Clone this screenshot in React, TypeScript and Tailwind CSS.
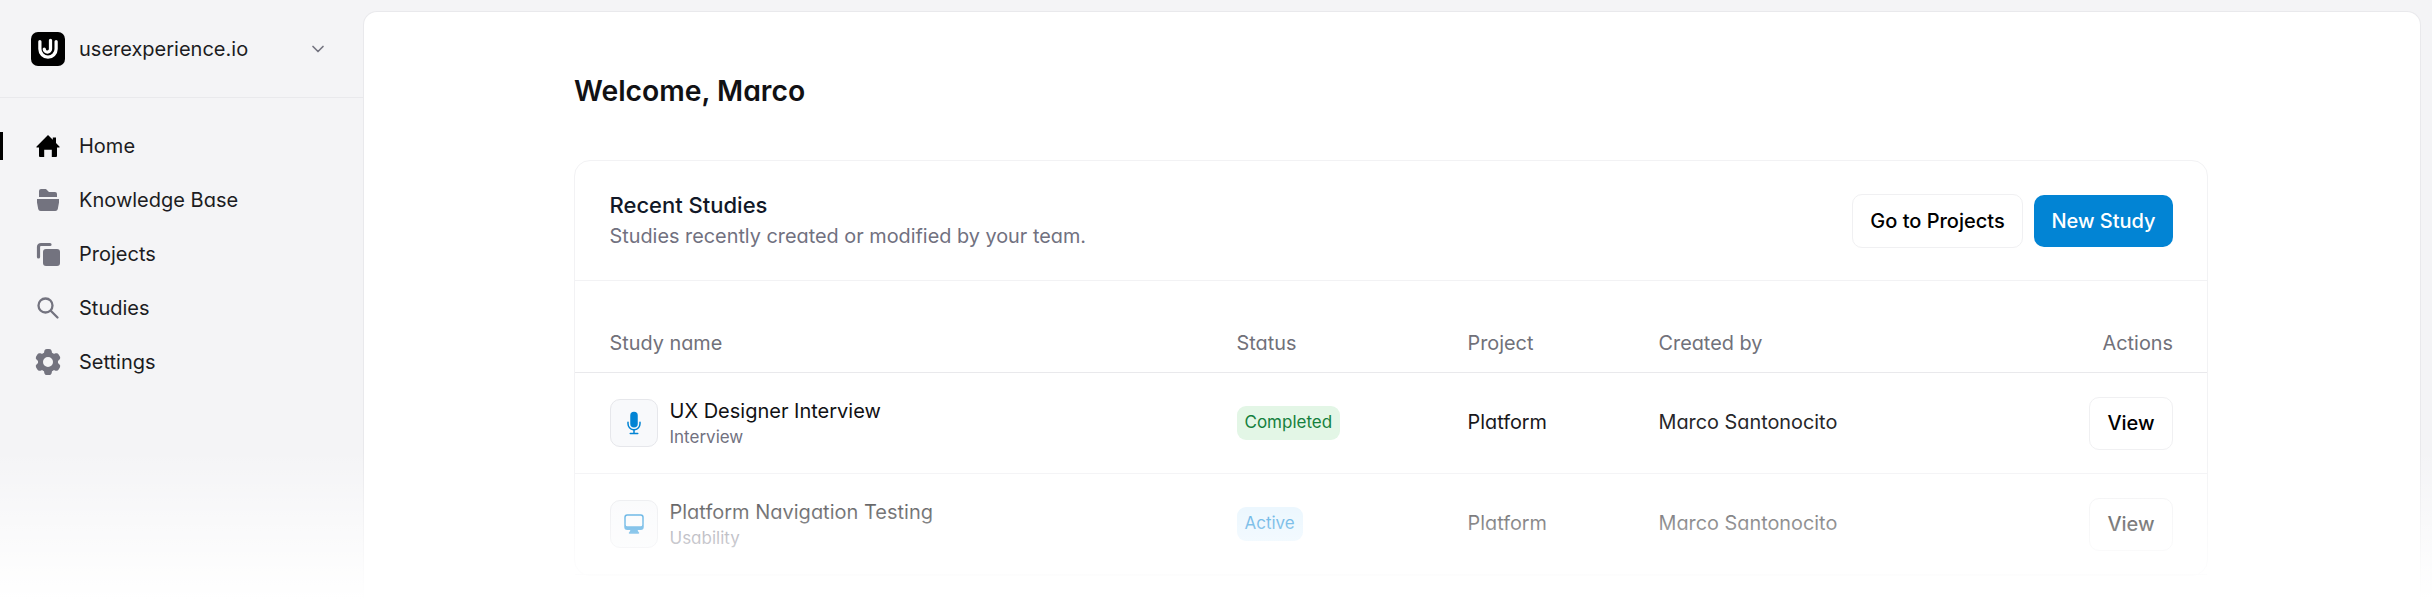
import { ChevronDown } from "lucide-react";
import type { ReactNode } from "react";
import { HiCog6Tooth, HiComputerDesktop, HiMicrophone } from "react-icons/hi2";

function HomeIcon() {
  return (
    <svg viewBox="0 0 24 24" className="size-[24px] shrink-0" fill="currentColor">
      <path d="M12 1 16.8 5.8V3.6h3.2V9l3.4 3.4c.5.5.2 1.2-.5 1.2H21V22a1 1 0 0 1-1 1h-4.2v-7.2H8.2V23H4a1 1 0 0 1-1-1v-8.4H1.1c-.7 0-1-.7-.5-1.2z" />
    </svg>
  );
}

function FolderIcon() {
  return (
    <svg viewBox="0 0 24 24" className="size-[24px] shrink-0" fill="currentColor">
      <path d="M3 3a2 2 0 0 1 2-2h4c1 0 1.6.5 2.2 1.2L13 4h6a2 2 0 0 1 2 2v3H3z" />
      <path d="M1 11h22v3.5l-1.2 6.5a2.5 2.5 0 0 1-2.500 2H4.700a2.500 2.500 0 0 1-2.500-2L1 14.500z" />
    </svg>
  );
}

function StackIcon() {
  return (
    <svg viewBox="0 0 24 24" className="size-[24px] shrink-0" fill="currentColor">
      <rect x="7" y="7" width="17" height="17" rx="3" />
      <path d="M2.5 15V5A2.5 2.5 0 0 1 5 2.5h9" fill="none" stroke="currentColor" strokeWidth="3.2" strokeLinecap="round" />
    </svg>
  );
}

function SearchIcon() {
  return (
    <svg viewBox="0 0 24 24" className="size-[24px] shrink-0" fill="none" stroke="currentColor" strokeWidth="2.3" strokeLinecap="round">
      <circle cx="9.5" cy="9.5" r="7" />
      <path d="M15 15l6.5 6.5" />
    </svg>
  );
}

const navItems = [
  { label: "Home", icon: <HomeIcon />, active: true },
  { label: "Knowledge Base", icon: <FolderIcon /> },
  { label: "Projects", icon: <StackIcon /> },
  { label: "Studies", icon: <SearchIcon /> },
  { label: "Settings", icon: <HiCog6Tooth className="size-[32px] shrink-0" /> },
];

const studies = [
  {
    name: "UX Designer Interview",
    kind: "Interview",
    icon: <HiMicrophone className="size-[24px] text-[#0284d4]" />,
    status: "Completed",
    statusClass: "bg-[#e3f6e6] text-[#15803d]",
  },
  {
    name: "Platform Navigation Testing",
    kind: "Usability",
    icon: <HiComputerDesktop className="size-[24px] text-[#0284d4]" />,
    status: "Active",
    statusClass: "bg-[#e0f2fe] text-[#0284d4]",
  },
];

const rowGrid = "grid grid-cols-[627px_231px_191px_1fr_auto] items-center pl-[34.5px] pr-[34px]";

function Logo() {
  return (
    <div className="flex size-[34px] items-center justify-center rounded-[7px] bg-black">
      <svg viewBox="0 0 24 24" className="size-[30px]" fill="none" stroke="white" strokeLinecap="round">
        <path strokeWidth="2.6" d="M14 5v7a2.5 2.5 0 0 1-5 0" />
        <path strokeWidth="2.6" d="M5.5 6v6a6.5 6.5 0 0 0 13 0V6" />
      </svg>
    </div>
  );
}

function NavRow({ label, icon, active }: { label: string; icon: ReactNode; active?: boolean }) {
  return (
    <div className="relative flex h-[54px] items-center pl-[36px]">
      {active && <span className="absolute left-0 top-[13px] h-[28px] w-[3px] bg-black" />}
      <span className={`flex w-[24px] items-center justify-center ${active ? "text-black" : "text-[#73737f]"}`}>
        {icon}
      </span>
      <span className="ml-[19px] text-[20px] text-[#1c1c22]">{label}</span>
    </div>
  );
}

function OutlineButton({ children, className }: { children: ReactNode; className: string }) {
  return (
    <button
      type="button"
      className={`rounded-[10px] border border-[#f0f0f2] bg-white text-[20px] font-medium text-black ${className}`}
    >
      {children}
    </button>
  );
}

export default function App() {
  return (
    <div
      className="relative flex h-[600px] overflow-hidden bg-[#f4f4f6] pr-[11px] pt-[11px] [font-feature-settings:'cv11']"
      style={{ fontFamily: "Inter, sans-serif" }}
    >
      <aside className="w-[363px] shrink-0">
        <div className="-mt-[11px] flex h-[98px] items-center border-b border-[#e9e9ec] pl-[31px] pr-[35px]">
          <Logo />
          <span className="ml-[14px] text-[20px] text-[#1c1c22]">userexperience.io</span>
          <ChevronDown className="ml-auto size-[20px] text-[#73737f]" />
        </div>
        <nav className="pt-[21px]">
          {navItems.map((item) => (
            <NavRow key={item.label} {...item} />
          ))}
        </nav>
      </aside>

      <main className="min-w-0 flex-1 rounded-t-[14px] border border-b-0 border-[#e9e9ec] bg-white pl-[210px] pr-[212px]">
        <h1 className="mt-[61px] text-[28.3px] font-semibold leading-[36px] text-[#111114]">Welcome, Marco</h1>
        <section className="mt-[51px] rounded-[16px] border border-[#f2f2f4]">
          <div className="flex h-[120px] items-center justify-between border-b border-[#f2f2f4] pl-[34.5px] pr-[34px]">
            <div>
              <h2 className="text-[22px] font-medium leading-[28px] text-[#111827]">Recent Studies</h2>
              <p className="mt-[3px] text-[19.85px] leading-[28px] text-[#71717f]">
                Studies recently created or modified by your team.
              </p>
            </div>
            <div className="flex items-center gap-[11px]">
              <OutlineButton className="h-[54px] w-[171px]">Go to Projects</OutlineButton>
              <button
                type="button"
                className="h-[52px] w-[139px] rounded-[10px] bg-[#0284d4] text-[20px] font-medium text-white"
              >
                New Study
              </button>
            </div>
          </div>

          <div className={`${rowGrid} h-[92px] border-b border-[#e9e9ec] pt-[35px] text-[19.85px] text-[#71717a]`}>
            <span>Study name</span>
            <span>Status</span>
            <span>Project</span>
            <span>Created by</span>
            <span>Actions</span>
          </div>

          {studies.map((study) => (
            <div key={study.name} className={`${rowGrid} h-[101px] border-b border-[#f2f2f4] text-[19.85px]`}>
              <div className="flex items-center">
                <div className="flex size-[48px] items-center justify-center rounded-[10px] border border-[#e6e7eb] bg-[#f8f9fb]">
                  {study.icon}
                </div>
                <div className="ml-[12px] pt-[1px]">
                  <div className="text-[20px] leading-[26px] text-[#111114]">{study.name}</div>
                  <div className="mt-[1px] text-[17px] leading-[24px] text-[#71717f]">{study.kind}</div>
                </div>
              </div>
              <div>
                <span className={`inline-flex h-[34px] items-center rounded-[9px] px-[8px] text-[17px] ${study.statusClass}`}>
                  {study.status}
                </span>
              </div>
              <span className="text-[#18181b]">Platform</span>
              <span className="text-[#27272a]">Marco Santonocito</span>
              <OutlineButton className="h-[53px] w-[84px]">View</OutlineButton>
            </div>
          ))}
        </section>
      </main>

      <div className="pointer-events-none absolute inset-x-0 bottom-0 h-[150px] bg-gradient-to-b from-white/0 to-white" />
    </div>
  );
}
